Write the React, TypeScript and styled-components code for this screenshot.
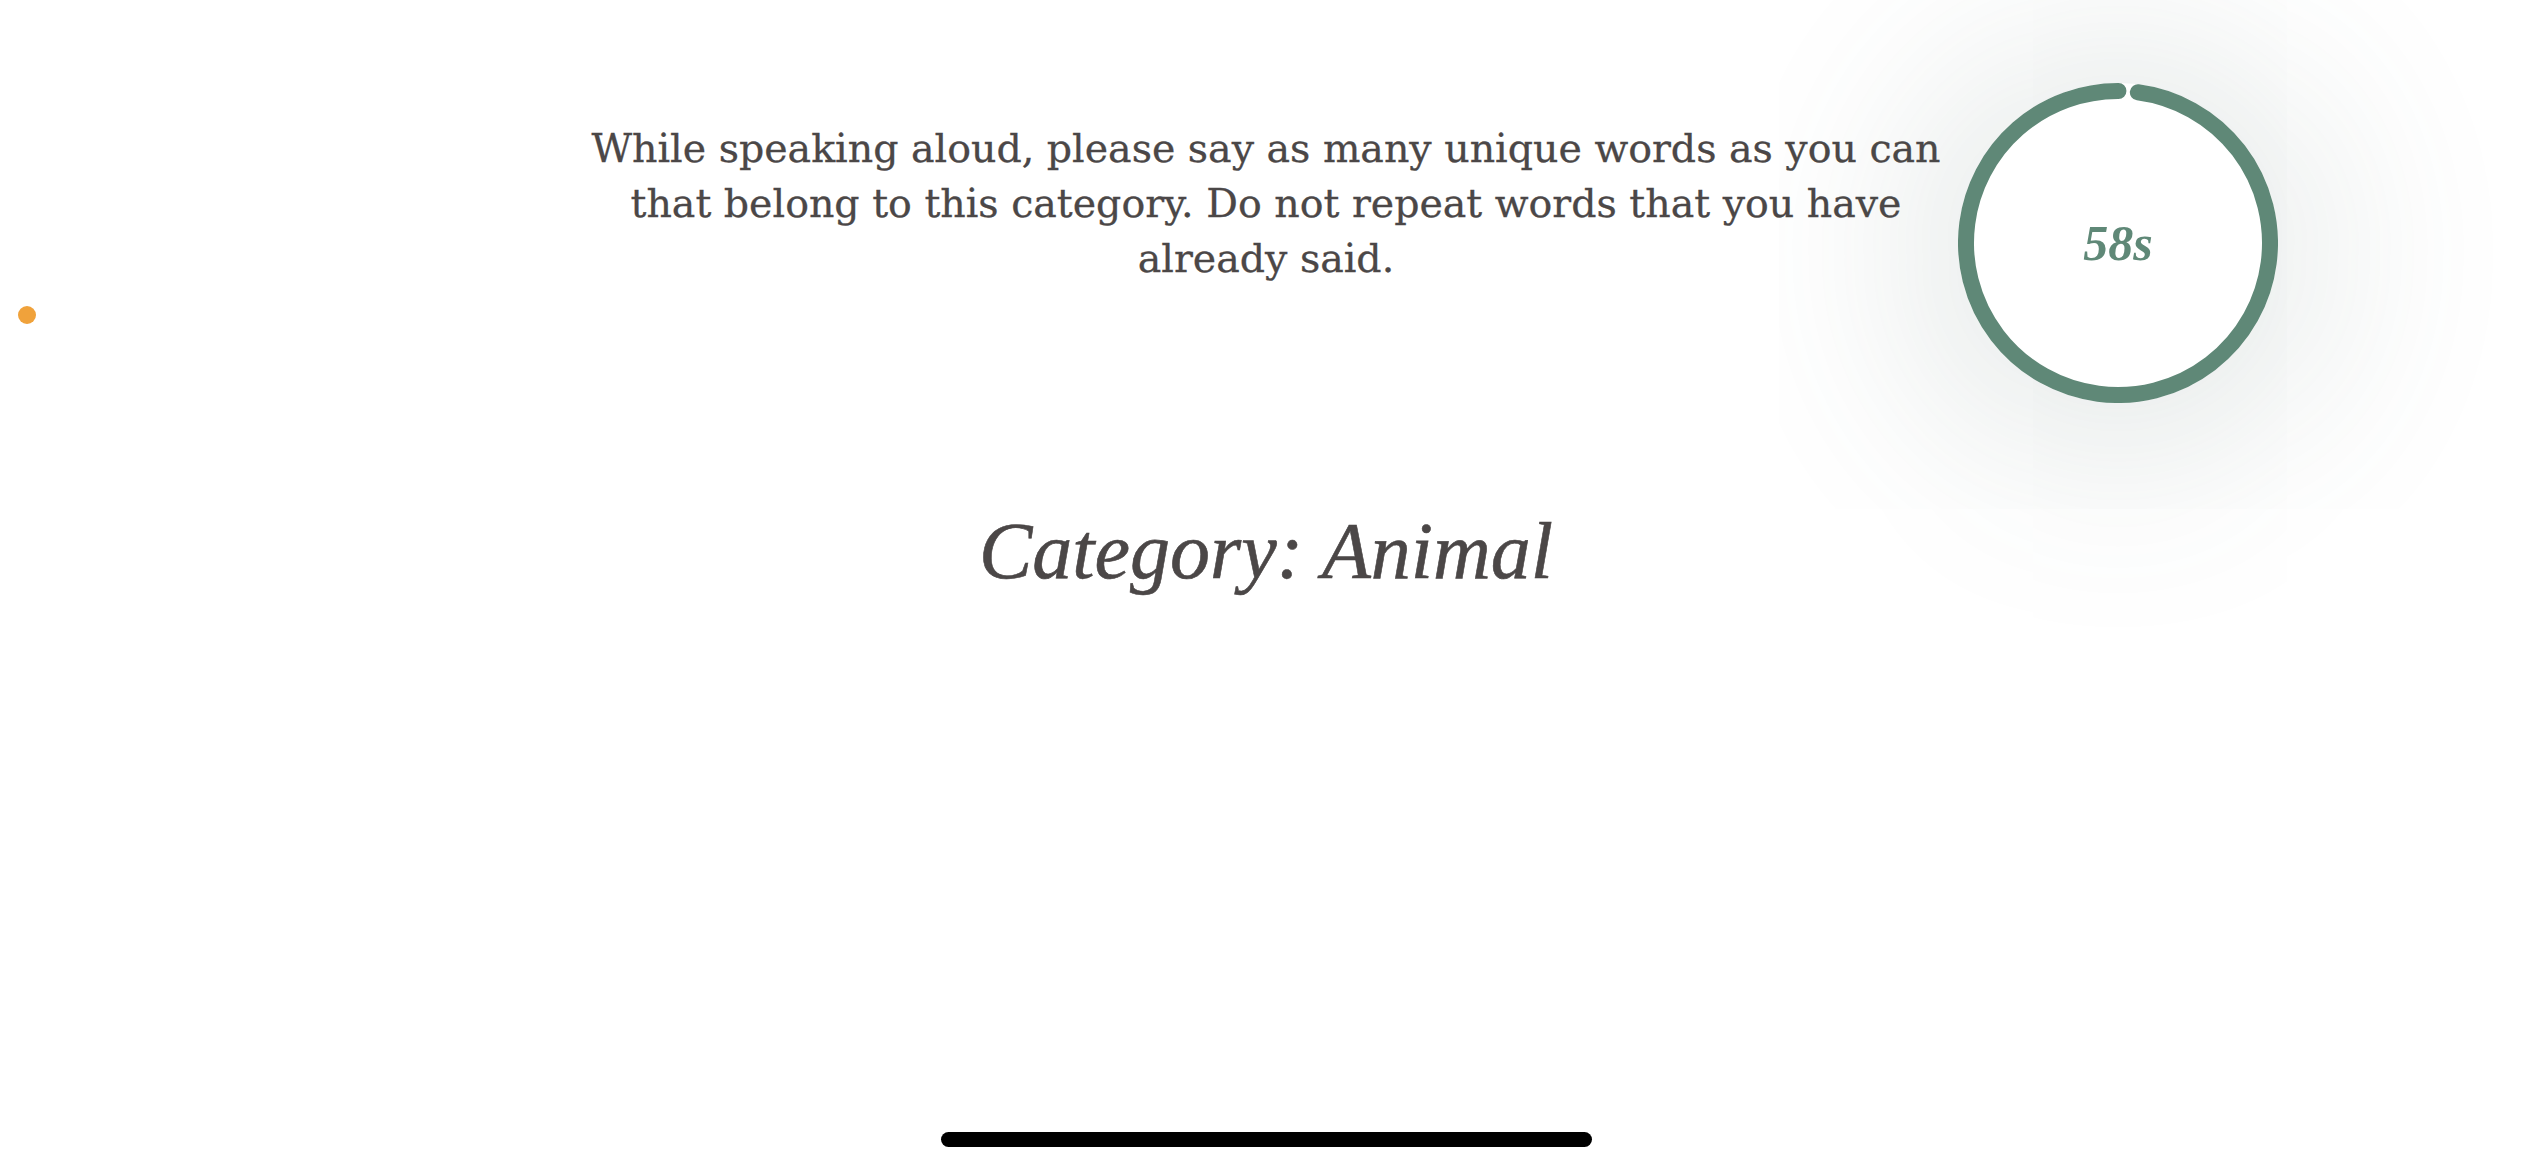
import * as React from 'react';
import styled, { createGlobalStyle } from 'styled-components';

const GlobalStyle = createGlobalStyle`
  html, body {
    margin: 0;
    padding: 0;
    background: #ffffff;
  }
  #root {
    height: 100vh;
  }
`;

const colors = {
  text: '#4b4747',
  timer: '#5f8877',
  dot: '#f0a23b',
};

const Screen = styled.div`
  position: relative;
  width: 100vw;
  height: 100vh;
  overflow: hidden;
  display: flex;
  flex-direction: column;
  align-items: center;
  font-family: 'DejaVu Serif', 'Liberation Serif', serif;
  color: ${colors.text};
`;

const Header = styled.div`
  width: 100%;
  display: grid;
  grid-template-columns: 1fr auto 1fr;
  align-items: start;
  padding-top: 83px;
`;

const Instructions = styled.p`
  grid-column: 2;
  margin: 38px 0 0;
  width: 1360px;
  font-size: 39.5px;
  line-height: 55px;
  text-align: center;
  -webkit-text-stroke: 0.3px ${colors.text};
`;

const TimerSlot = styled.div`
  grid-column: 3;
  padding-left: 12px;
`;

const Timer = styled.div`
  position: relative;
  width: 320px;
  height: 320px;
  border-radius: 50%;
  background: #ffffff;
  box-shadow: 0 10px 200px 50px rgba(70, 100, 90, 0.14);
  display: flex;
  align-items: center;
  justify-content: center;
`;

const TimerRing = styled.svg`
  position: absolute;
  inset: 0;
`;

const TimerLabel = styled.span`
  position: relative;
  font-family: 'Liberation Serif', serif;
  font-style: italic;
  font-weight: 700;
  font-size: 50px;
  color: ${colors.timer};
`;

const Category = styled.h1`
  margin: 108px 0 0;
  font-family: 'Liberation Serif', serif;
  font-style: italic;
  font-weight: 400;
  font-size: 80px;
  line-height: 1;
  color: ${colors.text};
  -webkit-text-stroke: 0.6px ${colors.text};
`;

const RecordingDot = styled.span`
  position: absolute;
  left: 18px;
  top: 306px;
  width: 18px;
  height: 18px;
  border-radius: 50%;
  background: ${colors.dot};
`;

const HomeIndicator = styled.div`
  margin-top: auto;
  margin-bottom: 23px;
  width: 651px;
  height: 15px;
  border-radius: 8px;
  background: #000000;
`;

const SIZE = 320;
const STROKE = 16;
const R = (SIZE - STROKE) / 2;
const CIRC = 2 * Math.PI * R;

const CountdownRing = ({ remaining, total }: { remaining: number; total: number }) => {
  // leave a sliver open at the top, like the running timer
  const gapDeg = 7.5 * (total - remaining) / 2;
  const arc = CIRC * (1 - gapDeg / 360);
  return (
    <TimerRing width={SIZE} height={SIZE} viewBox={`0 0 ${SIZE} ${SIZE}`}>
      <circle
        cx={SIZE / 2}
        cy={SIZE / 2}
        r={R}
        fill="none"
        stroke={colors.timer}
        strokeWidth={STROKE}
        strokeLinecap="round"
        strokeDasharray={`${arc} ${CIRC}`}
        transform={`rotate(${-90 + gapDeg} ${SIZE / 2} ${SIZE / 2})`}
      />
    </TimerRing>
  );
};

export default function App() {
  const remaining = 58;
  return (
    <>
      <GlobalStyle />
      <Screen>
        <RecordingDot />
        <Header>
          <Instructions>
            While speaking aloud, please say as many unique words as you can
            <br />
            that belong to this category. Do not repeat words that you have
            <br />
            already said.
          </Instructions>
          <TimerSlot>
            <Timer>
              <CountdownRing remaining={remaining} total={60} />
              <TimerLabel>{remaining}s</TimerLabel>
            </Timer>
          </TimerSlot>
        </Header>
        <Category>Category: Animal</Category>
        <HomeIndicator />
      </Screen>
    </>
  );
}
